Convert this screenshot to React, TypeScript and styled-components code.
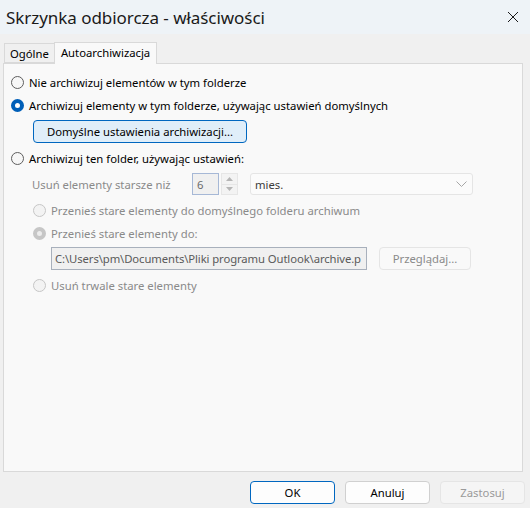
import React from "react";
import styled, { createGlobalStyle } from "styled-components";

const GlobalStyle = createGlobalStyle`
  html, body {
    margin: 0;
    padding: 0;
    background: #f0f0f0;
  }
  * {
    box-sizing: border-box;
  }
`;

type RadioState = "off" | "on";

const Radio: React.FC<{
  checked?: boolean;
  disabled?: boolean;
  indent?: number;
  label: string;
}> = ({ checked, disabled, indent = 0, label }) => (
  <RadioRow $indent={indent}>
    <RadioCircle $state={checked ? "on" : "off"} $disabled={disabled} />
    <RadioLabel $disabled={disabled}>{label}</RadioLabel>
  </RadioRow>
);

const App: React.FC = () => {
  return (
    <>
      <GlobalStyle />
      <Window>
        <TitleBar>
          <Title>Skrzynka odbiorcza - właściwości</Title>
          <CloseButton>
            <svg width="12" height="12" viewBox="0 0 12 12">
              <path d="M1 1 L11 11 M11 1 L1 11" stroke="#1a1a1a" strokeWidth="1" fill="none" />
            </svg>
          </CloseButton>
        </TitleBar>

        <TabStrip>
          <Tab>Ogólne</Tab>
          <Tab $active>Autoarchiwizacja</Tab>
        </TabStrip>

        <Panel>
          <Radio label="Nie archiwizuj elementów w tym folderze" />
          <Radio checked label="Archiwizuj elementy w tym folderze, używając ustawień domyślnych" />
          <DefaultsButton>Domyślne ustawienia archiwizacji...</DefaultsButton>
          <Spacer $h={4} />
          <Radio label="Archiwizuj ten folder, używając ustawień:" />

          <AgeRow>
            <AgeLabel>Usuń elementy starsze niż</AgeLabel>
            <SpinInput>6</SpinInput>
            <Spinner>
              <SpinHalf>
                <svg width="7" height="4" viewBox="0 0 7 4">
                  <path d="M0 4 L3.5 0 L7 4 Z" fill="#b5b5b5" />
                </svg>
              </SpinHalf>
              <SpinHalf>
                <svg width="7" height="4" viewBox="0 0 7 4">
                  <path d="M0 0 L3.5 4 L7 0 Z" fill="#b5b5b5" />
                </svg>
              </SpinHalf>
            </Spinner>
            <Select>
              <span>mies.</span>
              <svg width="11" height="6" viewBox="0 0 11 6">
                <path d="M0.5 0.5 L5.5 5.5 L10.5 0.5" stroke="#a6a6a6" strokeWidth="1" fill="none" />
              </svg>
            </Select>
          </AgeRow>

          <Spacer $h={4} />
          <Radio disabled indent={22} label="Przenieś stare elementy do domyślnego folderu archiwum" />
          <Radio disabled checked indent={22} label="Przenieś stare elementy do:" />
          <PathRow>
            <PathInput>
              <PathText>C:\Users\pm\Documents\Pliki programu Outlook\archive.p</PathText>
            </PathInput>
            <BrowseButton>Przeglądaj...</BrowseButton>
          </PathRow>
          <Spacer $h={4} />
          <Radio disabled indent={22} label="Usuń trwale stare elementy" />
        </Panel>

        <Footer>
          <DialogButton $variant="primary">OK</DialogButton>
          <DialogButton>Anuluj</DialogButton>
          <DialogButton $variant="disabled">Zastosuj</DialogButton>
        </Footer>
      </Window>
    </>
  );
};

export default App;

// Styled components
const Window = styled.div`
  width: 530px;
  height: 508px;
  display: flex;
  flex-direction: column;
  background: #f0f0f0;
  font-family: "Noto Sans", "Open Sans", sans-serif;
  font-size: 11.3px;
  color: #000;
  overflow: hidden;
`;

const TitleBar = styled.div`
  height: 34px;
  flex: none;
  display: flex;
  align-items: center;
  justify-content: space-between;
  padding: 0 10px 0 6px;
  background: #eef3f7;
`;

const Title = styled.div`
  font-size: 17px;
  color: #1a1a1a;
  letter-spacing: -0.05px;
`;

const CloseButton = styled.div`
  display: flex;
  align-items: center;
  justify-content: center;
  width: 14px;
  height: 14px;
`;

const TabStrip = styled.div`
  height: 29px;
  flex: none;
  display: flex;
  align-items: flex-end;
  padding-left: 4px;
  position: relative;
  z-index: 1;
`;

const Tab = styled.div<{ $active?: boolean }>`
  display: flex;
  align-items: center;
  padding: 0 ${(p) => (p.$active ? "6px" : "5px")};
  height: ${(p) => (p.$active ? "22px" : "20px")};
  margin-bottom: ${(p) => (p.$active ? "-1px" : "0")};
  padding-bottom: ${(p) => (p.$active ? "2px" : "0")};
  background: ${(p) => (p.$active ? "#f9f9f9" : "#f0f0f0")};
  border: 1px solid #d9d9d9;
  border-bottom: ${(p) => (p.$active ? "none" : "1px solid #d9d9d9")};
  border-right: ${(p) => (p.$active ? "1px solid #d9d9d9" : "none")};
  color: #000;
`;

const Panel = styled.div`
  height: 409px;
  flex: none;
  margin: 0 7px 0 3px;
  padding: 7px 0 0 7px;
  background: #f9f9f9;
  border: 1px solid #d9d9d9;
  display: flex;
  flex-direction: column;
  align-items: flex-start;
`;

const Spacer = styled.div<{ $h: number }>`
  height: ${(p) => p.$h}px;
  flex: none;
`;

const RadioRow = styled.div<{ $indent: number }>`
  height: 23px;
  display: flex;
  align-items: center;
  gap: 5px;
  margin-left: ${(p) => p.$indent}px;
`;

const RadioCircle = styled.span<{ $state: RadioState; $disabled?: boolean }>`
  width: 13px;
  height: 13px;
  border-radius: 50%;
  flex: none;
  border: ${(p) =>
    p.$state === "on"
      ? `4px solid ${p.$disabled ? "#c6c6c6" : "#005fb8"}`
      : `1px solid ${p.$disabled ? "#c6c6c6" : "#5e5e5e"}`};
  background: ${(p) =>
    p.$state === "on" ? (p.$disabled ? "#ececec" : "#ffffff") : p.$disabled ? "#f3f3f3" : "#f7f7f7"};
`;

const RadioLabel = styled.span<{ $disabled?: boolean }>`
  color: ${(p) => (p.$disabled ? "#8a8a8a" : "#000")};
  white-space: nowrap;
`;

const DefaultsButton = styled.div`
  margin-left: 22px;
  margin-top: 3px;
  width: 214px;
  height: 23px;
  display: flex;
  align-items: center;
  justify-content: center;
  background: #e0eef9;
  border: 1px solid #0067c0;
  border-radius: 4px;
  color: #000;
`;

const AgeRow = styled.div`
  margin-top: 3px;
  margin-left: 21px;
  height: 22px;
  display: flex;
  align-items: center;
`;

const AgeLabel = styled.span`
  width: 160px;
  color: #8a8a8a;
  white-space: nowrap;
`;

const SpinInput = styled.div`
  width: 27px;
  height: 22px;
  display: flex;
  align-items: center;
  padding-left: 4px;
  background: #f0f0f0;
  border: 1px solid #a6b8d6;
  color: #6a6a6a;
`;

const Spinner = styled.div`
  width: 17px;
  height: 22px;
  margin-left: 2px;
  display: flex;
  flex-direction: column;
`;

const SpinHalf = styled.div`
  flex: 1;
  display: flex;
  align-items: center;
  justify-content: center;
  background: #f3f3f3;
  border: 1px solid #e6e6e6;
  & + & {
    border-top: none;
  }
`;

const Select = styled.div`
  margin-left: 12px;
  width: 223px;
  height: 22px;
  display: flex;
  align-items: center;
  justify-content: space-between;
  padding: 0 5px 0 4px;
  background: #fbfbfb;
  border: 1px solid #e5e5e5;
  border-radius: 3px;
  color: #3c3c3c;
`;

const PathRow = styled.div`
  margin-top: 2px;
  margin-left: 40px;
  display: flex;
  align-items: center;
  gap: 12px;
`;

const PathInput = styled.div`
  width: 316px;
  height: 23px;
  display: flex;
  align-items: center;
  padding-left: 3px;
  background: #f0f0f0;
  border: 1px solid #a8b0bc;
  color: #5a5a5a;
  overflow: hidden;
`;

const PathText = styled.span`
  white-space: nowrap;
  letter-spacing: -0.1px;
`;

const BrowseButton = styled.div`
  width: 92px;
  height: 23px;
  display: flex;
  align-items: center;
  justify-content: center;
  background: #f9f9f9;
  border: 1px solid #e5e5e5;
  border-radius: 4px;
  color: #8a8a8a;
`;

const Footer = styled.div`
  flex: 1;
  display: flex;
  justify-content: flex-end;
  align-items: flex-start;
  gap: 10px;
  padding: 9px 5px 0 0;
`;

const DialogButton = styled.div<{ $variant?: "primary" | "disabled" }>`
  width: 85px;
  height: 23px;
  display: flex;
  align-items: center;
  justify-content: center;
  border-radius: 4px;
  background: ${(p) => (p.$variant === "disabled" ? "#f5f5f5" : "#fdfdfd")};
  border: 1px solid
    ${(p) => (p.$variant === "primary" ? "#0067c0" : p.$variant === "disabled" ? "#e5e5e5" : "#d0d0d0")};
  color: ${(p) => (p.$variant === "disabled" ? "#9a9a9a" : "#000")};
`;
